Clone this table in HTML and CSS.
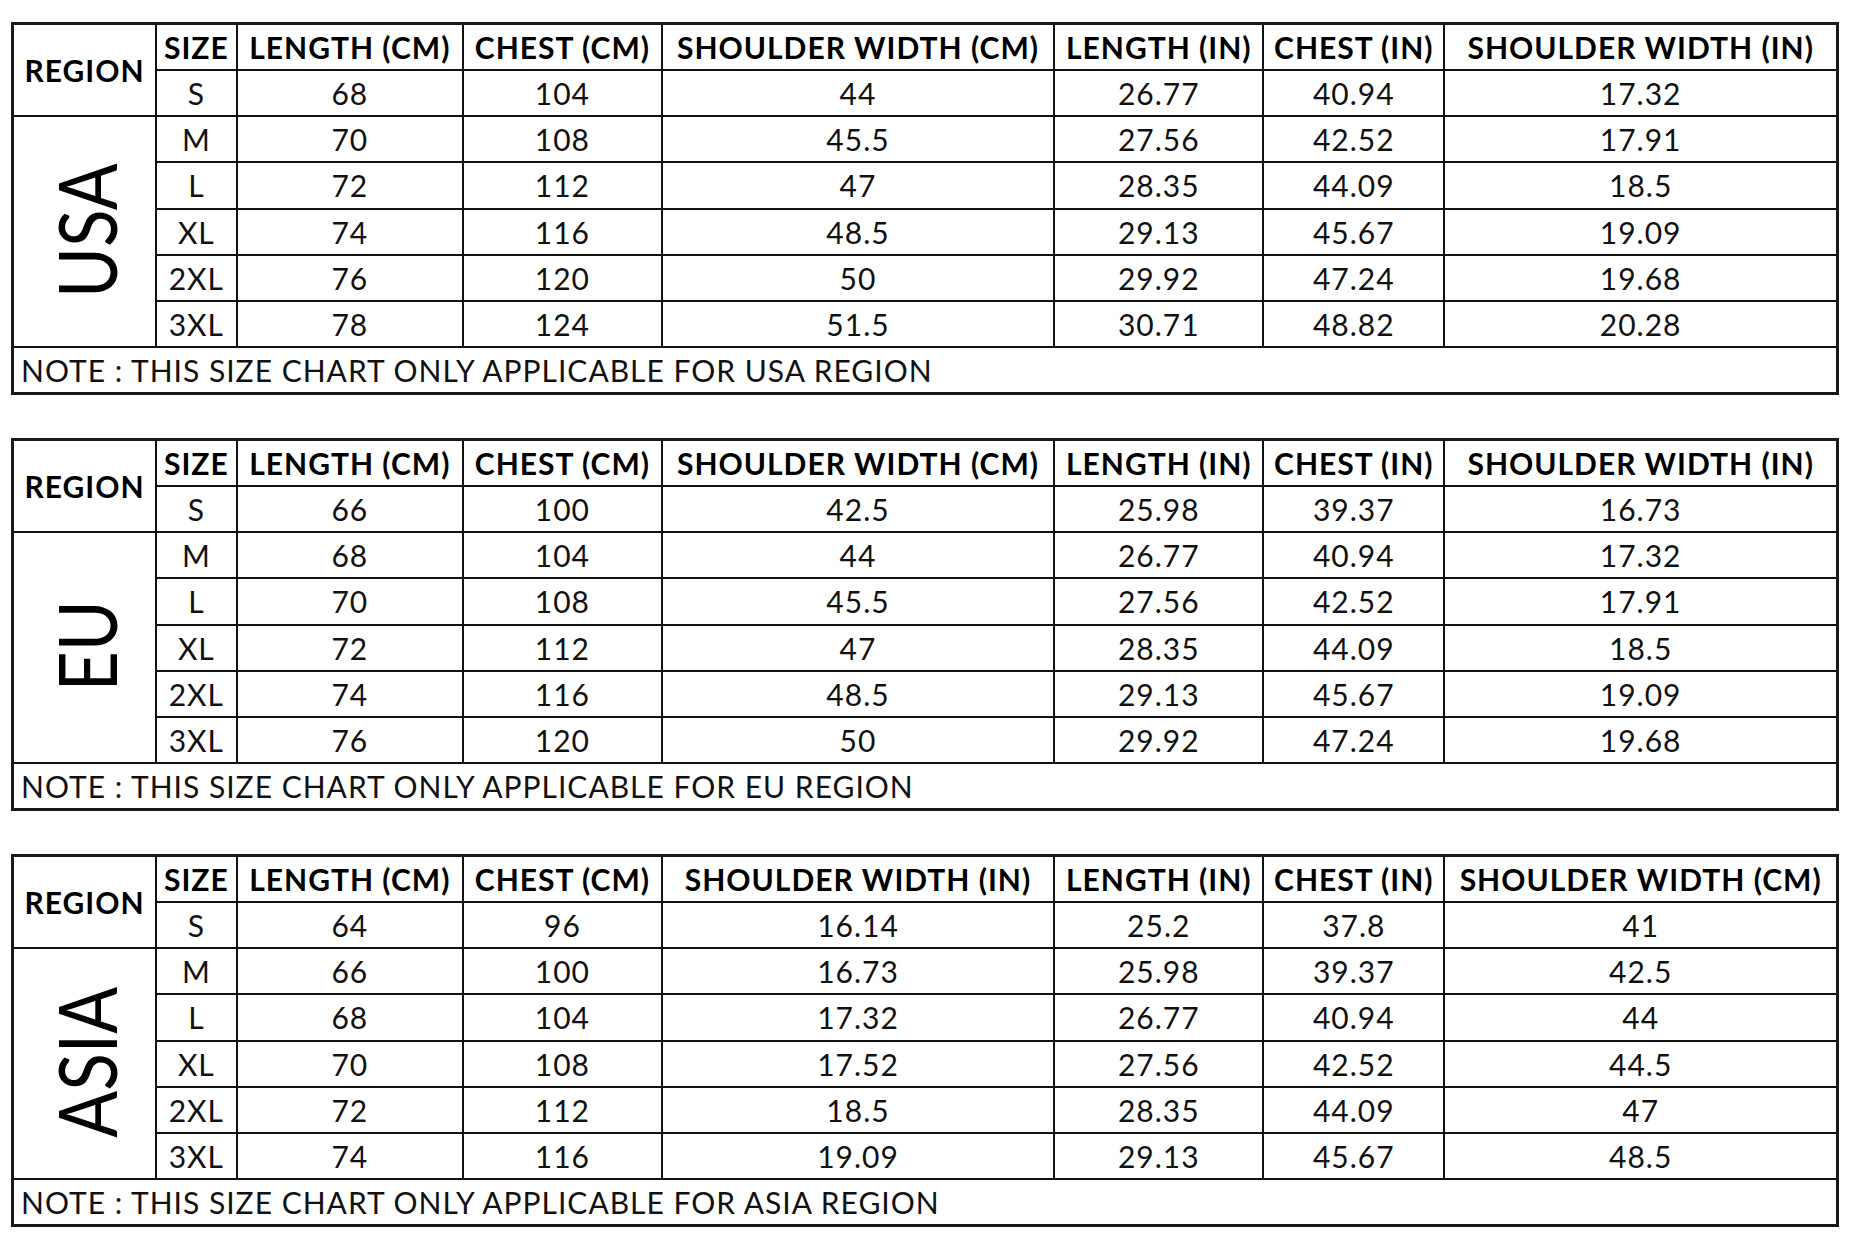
FILE: index.html
```html
<!DOCTYPE html>
<html>
<head>
<meta charset="utf-8">
<link rel="stylesheet" href="styles.css">
</head>
<body>
<div class="page">

<table class="chart">
<colgroup>
<col class="c-region"><col class="c-size"><col class="c-len"><col class="c-chest"><col class="c-sh"><col class="c-lin"><col class="c-cin"><col class="c-shin">
</colgroup>
<tr class="row head">
<th rowspan="2" class="region">REGION</th><th>SIZE</th><th>LENGTH (CM)</th><th>CHEST (CM)</th><th>SHOULDER WIDTH (CM)</th><th>LENGTH (IN)</th><th>CHEST (IN)</th><th>SHOULDER WIDTH (IN)</th>
</tr>
<tr class="row"><td>S</td><td>68</td><td>104</td><td>44</td><td>26.77</td><td>40.94</td><td>17.32</td></tr>
<tr class="row"><td rowspan="5" class="label"><span class="vtext">USA</span></td><td>M</td><td>70</td><td>108</td><td>45.5</td><td>27.56</td><td>42.52</td><td>17.91</td></tr>
<tr class="row"><td>L</td><td>72</td><td>112</td><td>47</td><td>28.35</td><td>44.09</td><td>18.5</td></tr>
<tr class="row"><td>XL</td><td>74</td><td>116</td><td>48.5</td><td>29.13</td><td>45.67</td><td>19.09</td></tr>
<tr class="row"><td>2XL</td><td>76</td><td>120</td><td>50</td><td>29.92</td><td>47.24</td><td>19.68</td></tr>
<tr class="row"><td>3XL</td><td>78</td><td>124</td><td>51.5</td><td>30.71</td><td>48.82</td><td>20.28</td></tr>
<tr class="row"><td colspan="8" class="note">NOTE : THIS SIZE CHART ONLY APPLICABLE FOR USA REGION</td></tr>
</table>

<table class="chart">
<colgroup>
<col class="c-region"><col class="c-size"><col class="c-len"><col class="c-chest"><col class="c-sh"><col class="c-lin"><col class="c-cin"><col class="c-shin">
</colgroup>
<tr class="row head">
<th rowspan="2" class="region">REGION</th><th>SIZE</th><th>LENGTH (CM)</th><th>CHEST (CM)</th><th>SHOULDER WIDTH (CM)</th><th>LENGTH (IN)</th><th>CHEST (IN)</th><th>SHOULDER WIDTH (IN)</th>
</tr>
<tr class="row"><td>S</td><td>66</td><td>100</td><td>42.5</td><td>25.98</td><td>39.37</td><td>16.73</td></tr>
<tr class="row"><td rowspan="5" class="label"><span class="vtext">EU</span></td><td>M</td><td>68</td><td>104</td><td>44</td><td>26.77</td><td>40.94</td><td>17.32</td></tr>
<tr class="row"><td>L</td><td>70</td><td>108</td><td>45.5</td><td>27.56</td><td>42.52</td><td>17.91</td></tr>
<tr class="row"><td>XL</td><td>72</td><td>112</td><td>47</td><td>28.35</td><td>44.09</td><td>18.5</td></tr>
<tr class="row"><td>2XL</td><td>74</td><td>116</td><td>48.5</td><td>29.13</td><td>45.67</td><td>19.09</td></tr>
<tr class="row"><td>3XL</td><td>76</td><td>120</td><td>50</td><td>29.92</td><td>47.24</td><td>19.68</td></tr>
<tr class="row"><td colspan="8" class="note">NOTE : THIS SIZE CHART ONLY APPLICABLE FOR EU REGION</td></tr>
</table>

<table class="chart">
<colgroup>
<col class="c-region"><col class="c-size"><col class="c-len"><col class="c-chest"><col class="c-sh"><col class="c-lin"><col class="c-cin"><col class="c-shin">
</colgroup>
<tr class="row head">
<th rowspan="2" class="region">REGION</th><th>SIZE</th><th>LENGTH (CM)</th><th>CHEST (CM)</th><th>SHOULDER WIDTH (IN)</th><th>LENGTH (IN)</th><th>CHEST (IN)</th><th>SHOULDER WIDTH (CM)</th>
</tr>
<tr class="row"><td>S</td><td>64</td><td>96</td><td>16.14</td><td>25.2</td><td>37.8</td><td>41</td></tr>
<tr class="row"><td rowspan="5" class="label"><span class="vtext">ASIA</span></td><td>M</td><td>66</td><td>100</td><td>16.73</td><td>25.98</td><td>39.37</td><td>42.5</td></tr>
<tr class="row"><td>L</td><td>68</td><td>104</td><td>17.32</td><td>26.77</td><td>40.94</td><td>44</td></tr>
<tr class="row"><td>XL</td><td>70</td><td>108</td><td>17.52</td><td>27.56</td><td>42.52</td><td>44.5</td></tr>
<tr class="row"><td>2XL</td><td>72</td><td>112</td><td>18.5</td><td>28.35</td><td>44.09</td><td>47</td></tr>
<tr class="row"><td>3XL</td><td>74</td><td>116</td><td>19.09</td><td>29.13</td><td>45.67</td><td>48.5</td></tr>
<tr class="row"><td colspan="8" class="note">NOTE : THIS SIZE CHART ONLY APPLICABLE FOR ASIA REGION</td></tr>
</table>

</div>
</body>
</html>
```

FILE: styles.css
```css
html, body {
  margin: 0;
  padding: 0;
  background: #ffffff;
}

.page {
  display: flex;
  flex-direction: column;
  gap: 43px;
  padding: 22px 0 0 11px;
  font-family: "Lato", "Liberation Sans", sans-serif;
  color: #111;
}

.chart {
  border-collapse: collapse;
  table-layout: fixed;
  width: 1828px;
  border: 3px solid #1a1a1a;
}

.c-region { width: 143.5px; }
.c-size { width: 80.6px; }
.c-len { width: 226.4px; }
.c-chest { width: 198.6px; }
.c-sh { width: 392.4px; }
.c-lin { width: 209px; }
.c-cin { width: 181px; }
.c-shin { width: 393px; }

.chart th,
.chart td {
  border: 2px solid #111;
  padding: 0;
  text-align: center;
  vertical-align: middle;
  white-space: nowrap;
  overflow: visible;
  line-height: 1;
  font-size: 30px;
  letter-spacing: 1px;
}

.row {
  height: 46.25px;
}

.chart th {
  font-weight: 700;
  color: #000;
}

.chart td {
  font-weight: 400;
}

.chart .note {
  text-align: left;
  padding-left: 7px;
}

.chart .label {
  padding: 0;
  letter-spacing: 0;
}

.vtext {
  display: inline-block;
  writing-mode: vertical-rl;
  transform: rotate(180deg) scaleY(0.845);
  font-family: "Lato", "Liberation Sans", sans-serif;
  font-size: 82px;
  font-weight: 400;
  line-height: 1;
  letter-spacing: 0;
  color: #000;
}
```
